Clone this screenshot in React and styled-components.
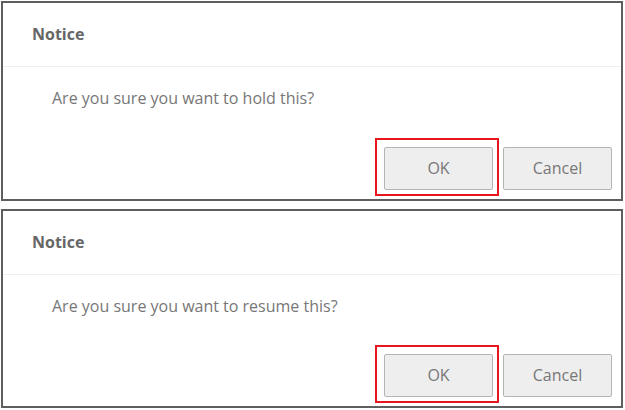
import React from 'react';
import styled, { createGlobalStyle } from 'styled-components';

const GlobalStyle = createGlobalStyle`
  body {
    margin: 0;
    padding: 1px;
    background: #ffffff;
    font-family: "Open Sans", "Liberation Sans", sans-serif;
  }
`;

const Stack = styled.div`
  display: flex;
  flex-direction: column;
  gap: 8px;
  width: 622px;
`;

const Dialog = styled.div`
  display: flex;
  flex-direction: column;
  box-sizing: border-box;
  height: ${p => p.height}px;
  border: 2px solid #5e5e5e;
  background: #fff;
`;

const Header = styled.div`
  box-sizing: border-box;
  height: 64px;
  padding: 21px 29px 0;
  border-bottom: 1px solid #efefef;
`;

const Title = styled.h3`
  margin: 0;
  font-size: 16px;
  line-height: 20px;
  font-weight: 700;
  color: #666666;
`;

const Body = styled.div`
  padding: 21px 49px 0;
  font-size: 16px;
  line-height: 20px;
  color: #777777;
`;

const Footer = styled.div`
  margin-top: auto;
  display: flex;
  justify-content: flex-end;
  gap: 10px;
  padding: 0 9px 9px 0;
`;

const Button = styled.button`
  box-sizing: border-box;
  width: 109px;
  height: 43px;
  padding: 0 0 2px;
  border: 1px solid #b4b4b4;
  border-radius: 2px;
  background: #eeeeee;
  color: #777777;
  font-family: "Open Sans", "Liberation Sans", sans-serif;
  font-size: 16px;
  cursor: pointer;
`;

const Marked = styled.div`
  position: relative;
  display: flex;
`;

const RedBox = styled.div`
  position: absolute;
  top: -9px;
  left: -9px;
  right: -6px;
  bottom: -6px;
  border: 2px solid #e8141e;
  pointer-events: none;
`;

const Confirm = ({ action, height }) => (
  <Dialog height={height}>
    <Header>
      <Title>Notice</Title>
    </Header>
    <Body>Are you sure you want to {action} this?</Body>
    <Footer>
      <Marked>
        <Button>OK</Button>
        <RedBox />
      </Marked>
      <Button>Cancel</Button>
    </Footer>
  </Dialog>
);

export default function App() {
  return (
    <>
      <GlobalStyle />
      <Stack>
        <Confirm action="hold" height={200} />
        <Confirm action="resume" height={199} />
      </Stack>
    </>
  );
}
